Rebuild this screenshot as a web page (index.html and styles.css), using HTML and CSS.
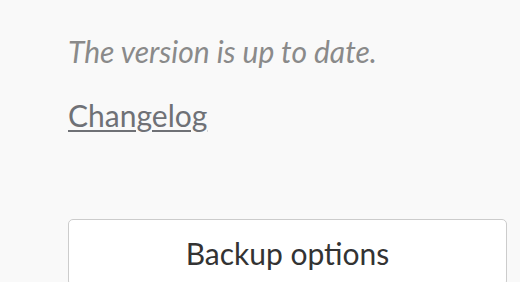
FILE: index.html
```html
<!DOCTYPE html>
<html>
<head>
<meta charset="utf-8">
<link rel="stylesheet" href="styles.css">
</head>
<body>
<main class="panel">
  <p class="status">The version is up to date.</p>
  <a class="changelog" href="#">Changelog</a>
  <button class="btn">Backup options</button>
</main>
</body>
</html>
```
FILE: styles.css
```css
html, body {
  margin: 0;
  padding: 0;
  background: #f9f9f9;
  font-family: Lato, "Open Sans", sans-serif;
  overflow: hidden;
}
.panel {
  display: flex;
  flex-direction: column;
  align-items: flex-start;
  padding: 32px 13px 0 68px;
}
.status {
  margin: 0;
  font-style: italic;
  font-size: 30px;
  line-height: 38px;
  color: #8a8a8a;
}
.changelog {
  margin-top: 26px;
  font-size: 30px;
  line-height: 38px;
  color: #6f7176;
  text-decoration: underline;
  text-decoration-thickness: 2px;
  text-underline-offset: 3px;
}
.btn {
  margin-top: 85px;
  align-self: stretch;
  height: 67px;
  background: #fff;
  border: 1px solid #cccccc;
  border-radius: 5px;
  font-family: Lato, sans-serif;
  font-size: 30px;
  color: #333;
  padding: 0;
}
```
